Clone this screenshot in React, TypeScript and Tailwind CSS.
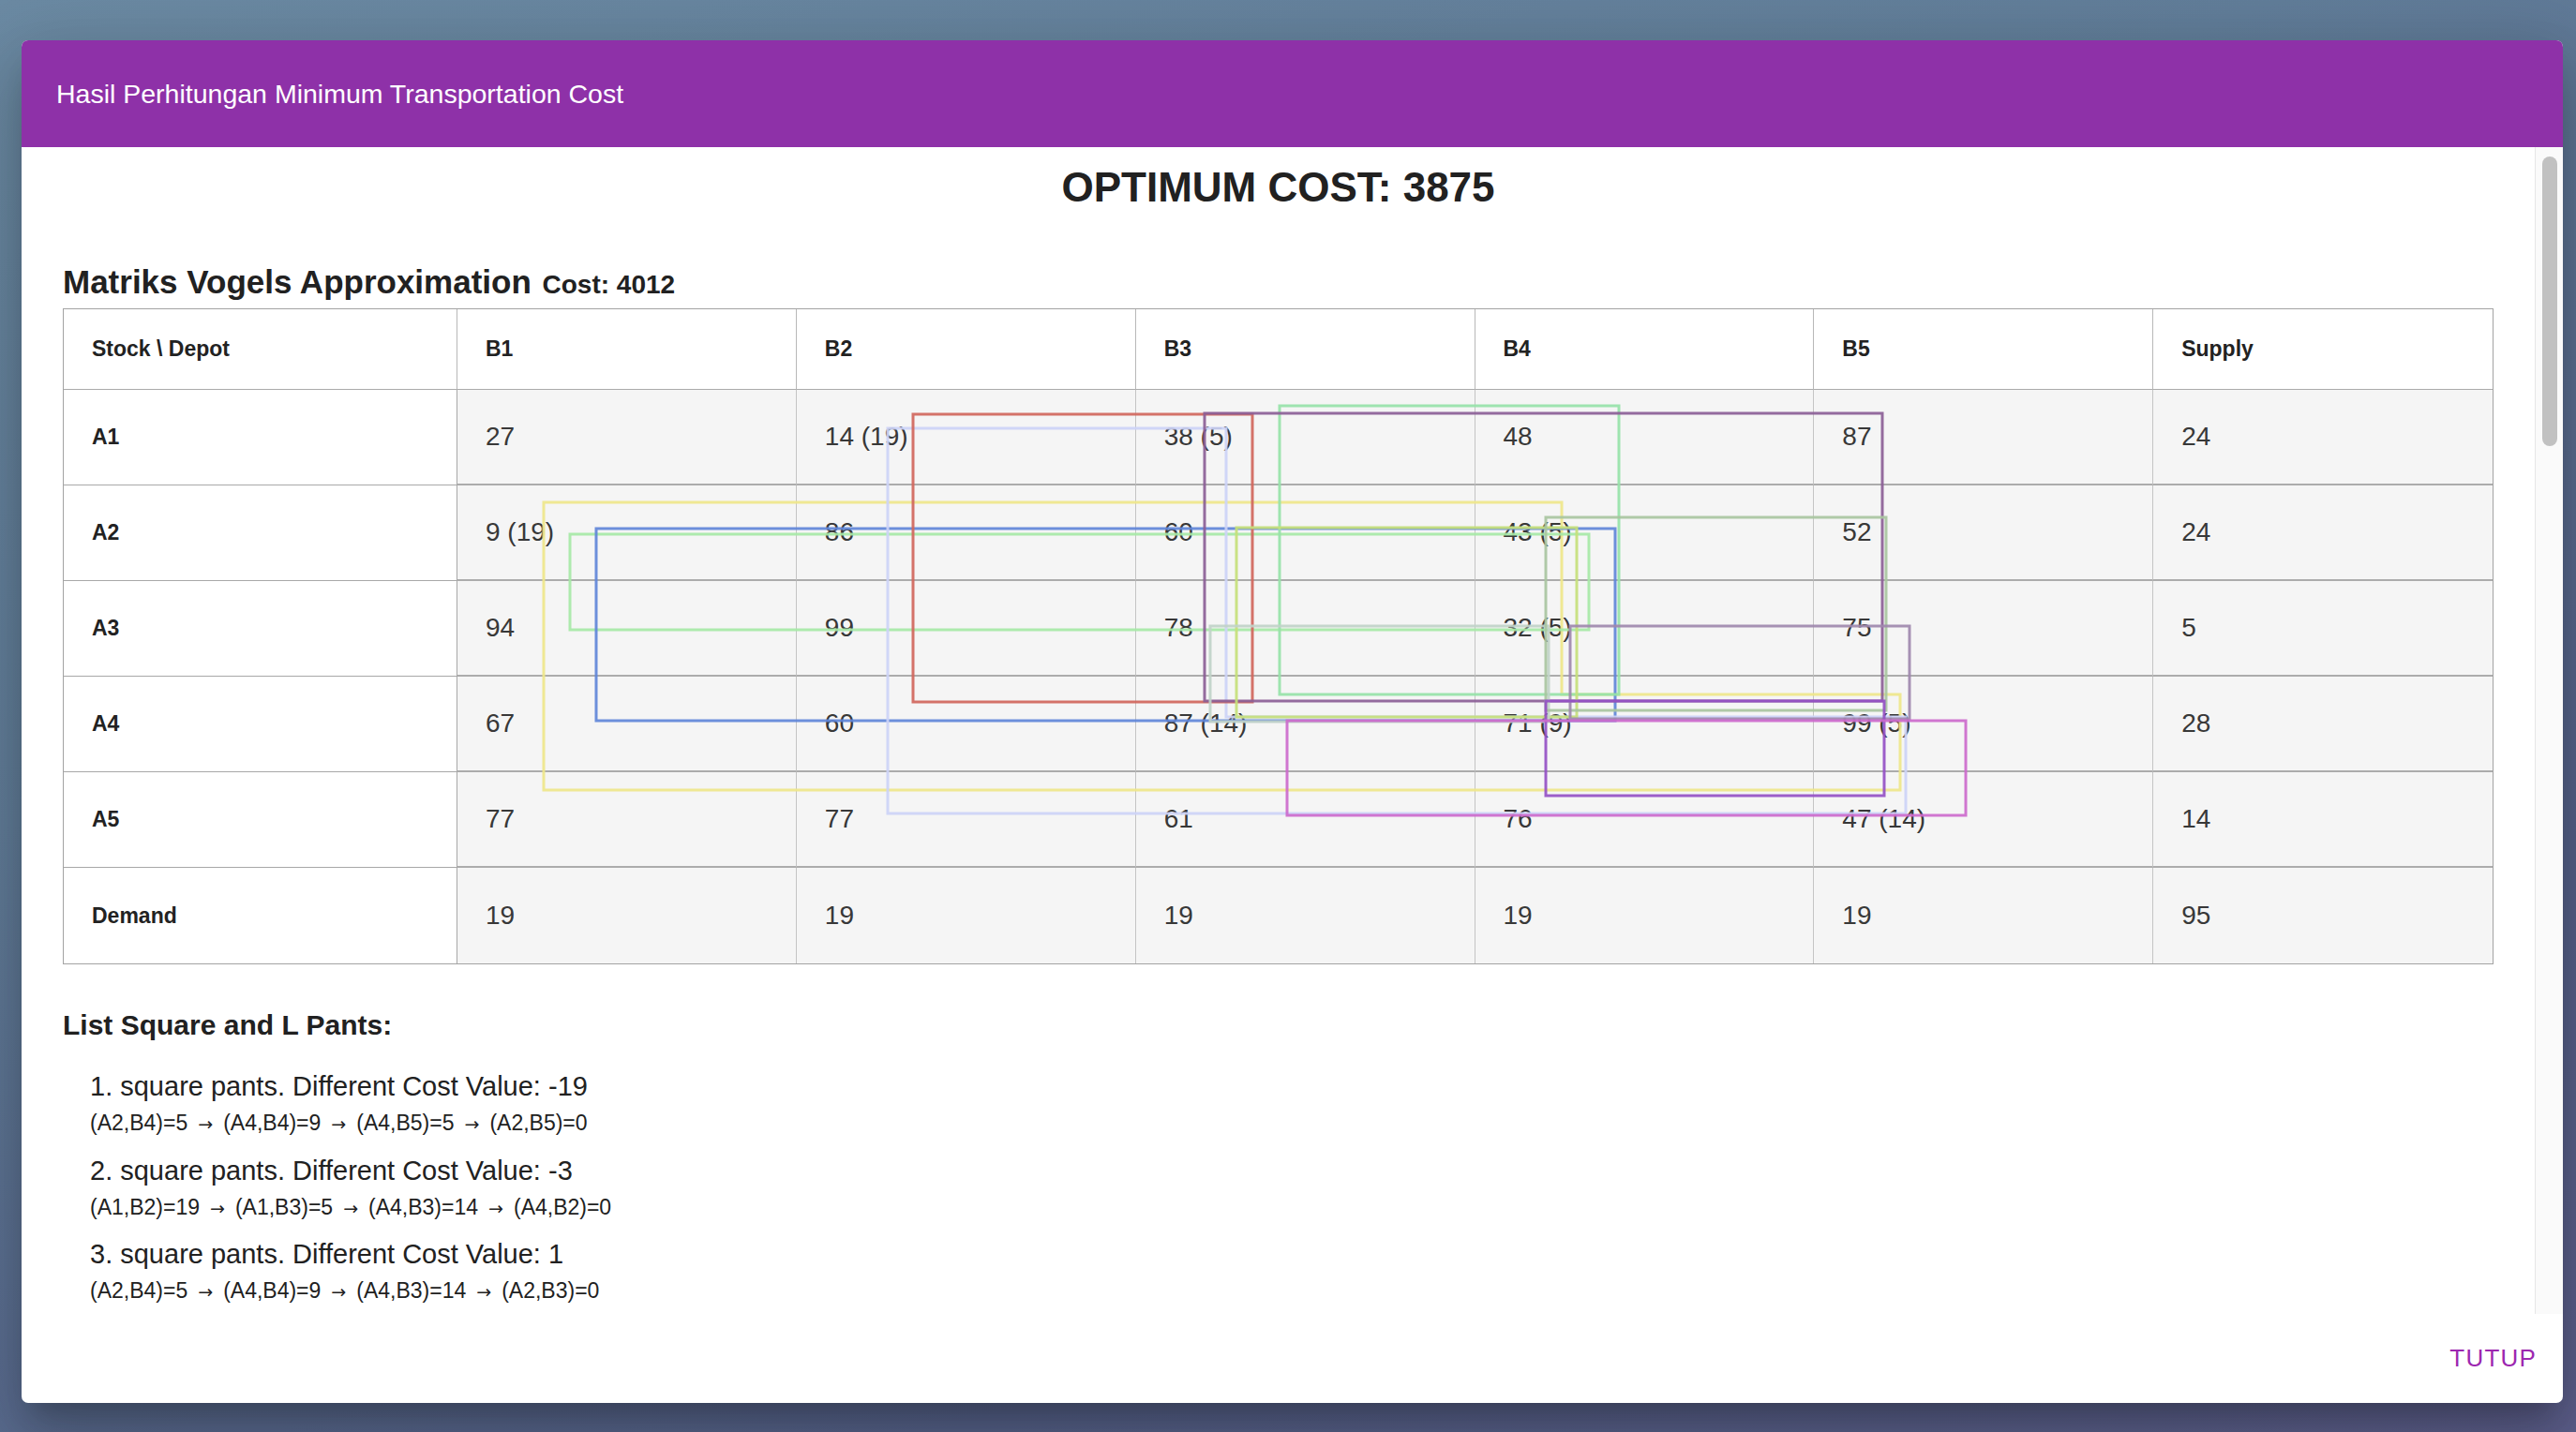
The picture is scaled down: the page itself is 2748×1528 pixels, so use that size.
import React from 'react'
import clsx from 'clsx'

const depots = ['B1', 'B2', 'B3', 'B4', 'B5']

const rows = [
  { label: 'A1', cells: ['27', '14 (19)', '38 (5)', '48', '87'], supply: '24' },
  { label: 'A2', cells: ['9 (19)', '86', '60', '43 (5)', '52'], supply: '24' },
  { label: 'A3', cells: ['94', '99', '78', '32 (5)', '75'], supply: '5' },
  { label: 'A4', cells: ['67', '60', '87 (14)', '71 (9)', '99 (5)'], supply: '28' },
  { label: 'A5', cells: ['77', '77', '61', '76', '47 (14)'], supply: '14' },
  { label: 'Demand', cells: ['19', '19', '19', '19', '19'], supply: '95' },
]

const pants = [
  {
    title: '1. square pants. Different Cost Value: -19',
    path: ['(A2,B4)=5', '(A4,B4)=9', '(A4,B5)=5', '(A2,B5)=0'],
  },
  {
    title: '2. square pants. Different Cost Value: -3',
    path: ['(A1,B2)=19', '(A1,B3)=5', '(A4,B3)=14', '(A4,B2)=0'],
  },
  {
    title: '3. square pants. Different Cost Value: 1',
    path: ['(A2,B4)=5', '(A4,B4)=9', '(A4,B3)=14', '(A2,B3)=0'],
  },
]

const box = (x1: number, y1: number, x2: number, y2: number) =>
  `${x1},${y1} ${x2},${y1} ${x2},${y2} ${x1},${y2}`

// stepping stone loops, px relative to the matrix' top-left corner
const loops = [
  { color: '#eee68a', points: '513,207 1599,207 1599,412 1960,412 1960,514 513,514' },
  { color: '#a6e8a6', points: box(541, 241, 1628, 343) },
  { color: '#5f86d8', points: box(569, 235, 1656, 440) },
  { color: '#ccd2f6', points: '880,128 1241,128 1241,436 1966,436 1966,539 880,539' },
  { color: '#d0665c', points: box(907, 113, 1269, 420) },
  { color: '#96e2a8', points: box(1298, 104, 1660, 412) },
  { color: '#8b5e96', points: box(1218, 112, 1941, 419) },
  { color: '#c6e07a', points: box(1252, 234, 1615, 436) },
  { color: '#c0d2c8', points: box(1224, 339, 1585, 441) },
  { color: '#a8c4a0', points: box(1582, 223, 1945, 429) },
  { color: '#9e88ac', points: box(1608, 339, 1970, 438) },
  { color: '#9450c4', points: box(1582, 419, 1943, 520) },
  { color: '#cc6acc', points: box(1306, 440, 2030, 541) },
]

function Matrix() {
  return (
    <div className="relative">
      <div className="grid w-full grid-cols-[420px_repeat(6,minmax(0,1fr))] grid-rows-[86px_repeat(6,102px)] border border-[#a3a3a3]">
        {['Stock \\ Depot', ...depots, 'Supply'].map((h, i) => (
          <div
            key={h}
            className={clsx(
              'flex items-center border-b border-[#ababab] bg-white pl-[30px] text-[23px] font-bold text-[#222]',
              i < 6 && 'border-r border-r-[#b8b8b8]'
            )}
          >
            {h}
          </div>
        ))}
        {rows.map((r, ri) => {
          const last = ri === rows.length - 1
          return (
            <React.Fragment key={r.label}>
              <div
                className={clsx(
                  'flex items-center border-r border-[#a8a8a8] bg-white pl-[30px] text-[23px] font-bold text-[#222]',
                  !last && 'border-b'
                )}
              >
                {r.label}
              </div>
              {[...r.cells, r.supply].map((v, ci) => (
                <div
                  key={ci}
                  className={clsx(
                    'flex items-center bg-[#f5f5f5] pl-[30px] text-[28px] text-[#383838]',
                    !last && 'border-b-2 border-b-[#acacac]',
                    ci < 5 && 'border-r border-r-[#c4c4c4]'
                  )}
                >
                  {v}
                </div>
              ))}
            </React.Fragment>
          )
        })}
      </div>
      <svg className="pointer-events-none absolute left-0 top-0" width={2593} height={700}>
        {loops.map((l, i) => (
          <polygon
            key={i}
            points={l.points}
            fill="none"
            stroke={l.color}
            strokeWidth={3}
            strokeOpacity={0.92}
          />
        ))}
      </svg>
    </div>
  )
}

export default function App() {
  return (
    <div className="h-[1528px] w-[2748px] overflow-hidden bg-[linear-gradient(160deg,#6b8aa3_0%,#617d99_35%,#56628a_75%,#5d5f8c_100%)] pl-[23px] pt-[43px] font-['Liberation_Sans',Arial,sans-serif]">
      <div className="flex h-[1454px] w-[2711px] flex-col overflow-hidden rounded-[7px] bg-white shadow-[0_20px_26px_-12px_rgba(0,0,0,0.2),0_42px_66px_5px_rgba(0,0,0,0.14),0_16px_80px_14px_rgba(0,0,0,0.12)]">
        {/* title bar */}
        <div className="flex h-[114px] shrink-0 items-center bg-[#8e31a8] pl-[37px] text-[28.5px] text-white">
          Hasil Perhitungan Minimum Transportation Cost
        </div>

        {/* scrolling content */}
        <div className="flex h-[1245px] shrink-0">
          <div className="min-w-0 flex-1 overflow-hidden px-[44px] pt-[17px] text-[#212121]">
            <h2 className="text-center text-[44px] font-bold leading-[52px]">OPTIMUM COST: 3875</h2>

            <h3 className="mt-[54px] text-[35px] font-bold leading-[42px]">
              Matriks Vogels Approximation{' '}
              <span className="ml-[2px] text-[28px] leading-none">Cost: 4012</span>
            </h3>

            <div className="mt-[7px]">
              <Matrix />
            </div>

            <h4 className="mt-[47px] text-[30px] font-bold leading-[36px]">List Square and L Pants:</h4>

            <div className="mt-[30px] pl-[29px]">
              {pants.map((p) => (
                <div key={p.title} className="mb-[19.5px]">
                  <p className="text-[29px] leading-[34px]">{p.title}</p>
                  <p className="mt-[8px] text-[23px] leading-[28px]">
                    {p.path.map((step, i) => (
                      <React.Fragment key={i}>
                        {i > 0 && (
                          <span className="mx-[11px] font-['DejaVu_Sans',sans-serif] text-[19px] leading-none">→</span>
                        )}
                        {step}
                      </React.Fragment>
                    ))}
                  </p>
                </div>
              ))}
            </div>
          </div>

          {/* scrollbar */}
          <div className="w-[30px] shrink-0 border-l border-[#e6e6e6] bg-[#fafafa] pl-[7px] pt-[10px]">
            <div className="h-[309px] w-[16px] rounded-full bg-[#c1c1c1]" />
          </div>
        </div>

        {/* actions */}
        <div className="flex h-[94px] shrink-0 items-center justify-end pr-[14px]">
          <button className="px-[14px] py-[10px] text-[26px] uppercase tracking-[1.2px] text-[#9c27b0]">
            Tutup
          </button>
        </div>
      </div>
    </div>
  )
}
